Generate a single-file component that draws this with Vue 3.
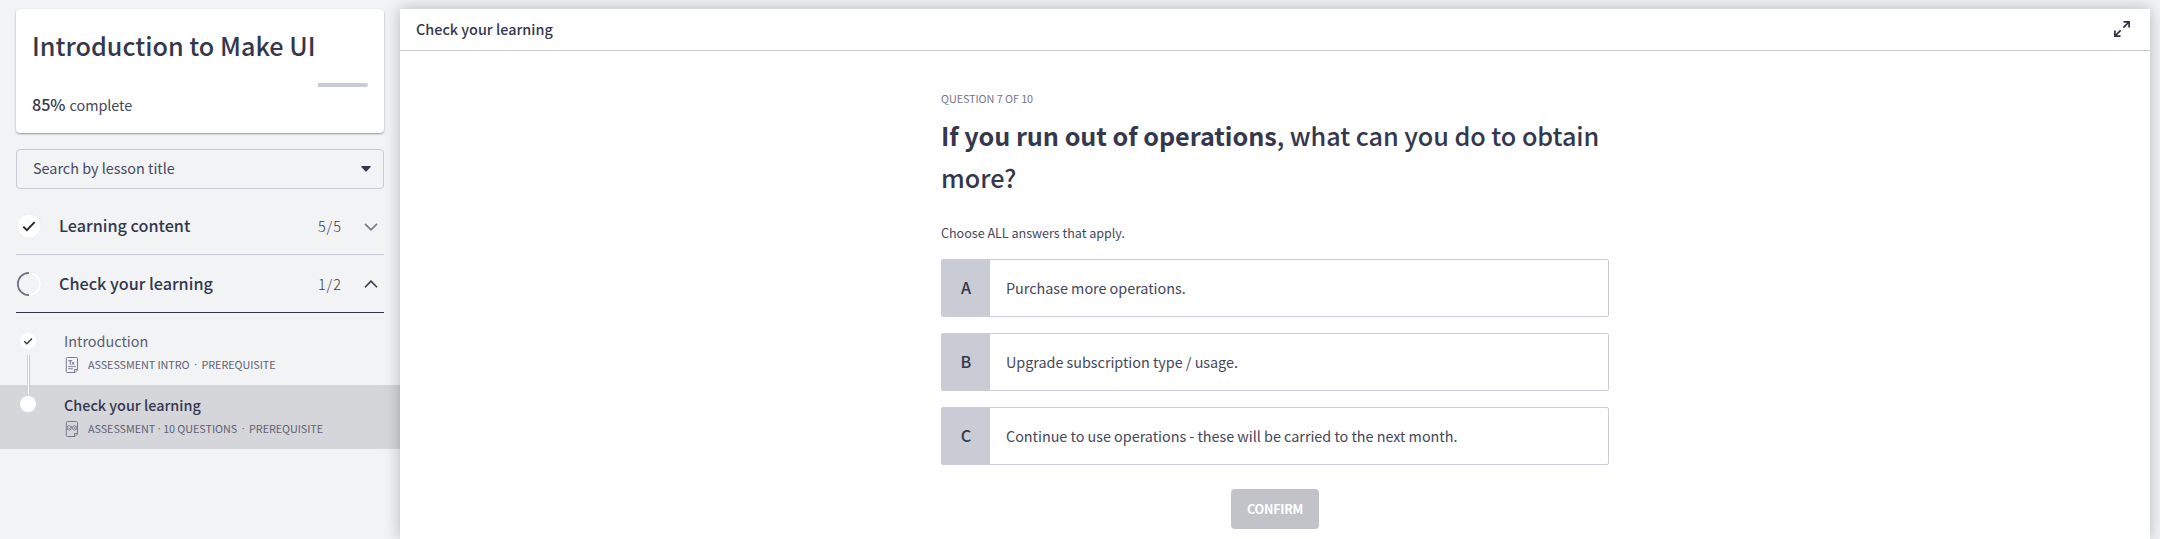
<script setup>
const answers = [
  { key: 'A', text: 'Purchase more operations.' },
  { key: 'B', text: 'Upgrade subscription type / usage.' },
  { key: 'C', text: 'Continue to use operations - these will be carried to the next month.' },
]
</script>

<template>
  <div class="app">
    <aside class="sidebar">
      <section class="course">
        <h1>Introduction to Make UI</h1>
        <div class="progress"><i></i></div>
        <p class="complete"><b>85%</b> <span>complete</span></p>
      </section>

      <div class="search">
        <span>Search by lesson title</span>
        <svg width="10" height="6" viewBox="0 0 10 6"><path d="M0.6 0H9.4Q10 .3 9.6 .9L5.7 5.3Q5 6 4.3 5.3L.4 .9Q0 .3 .6 0Z" fill="#34354e" /></svg>
      </div>

      <div class="group">
        <svg class="state" width="26" height="26" viewBox="0 0 26 26">
          <circle cx="13" cy="13" r="12" fill="#fff" stroke="#e4e6ea" stroke-width=".6" />
          <path d="M7.3 13.6L10.9 17.2L18.6 9.2" fill="none" stroke="#222" stroke-width="1.8" />
        </svg>
        <span class="name">Learning content</span>
        <span class="count">5/5</span>
        <svg class="chev" width="14" height="8" viewBox="0 0 14 8"><path d="M1 .8L7 6.8L13 .8" fill="none" stroke="#77798c" stroke-width="1.7" /></svg>
      </div>
      <div class="group open">
        <svg class="state" width="26" height="26" viewBox="0 0 26 26">
          <circle cx="13" cy="13" r="11.7" fill="none" stroke="#dfe1e5" stroke-width=".7" />
          <path d="M13 2A11 11 0 0 1 13 24" fill="none" stroke="#fff" stroke-width="1.7" />
          <path d="M13 1.8A11.2 11.2 0 0 0 13 24.2" fill="none" stroke="#6d6f82" stroke-width="1.7" />
        </svg>
        <span class="name">Check your learning</span>
        <span class="count">1/2</span>
        <svg class="chev" width="14" height="8" viewBox="0 0 14 8"><path d="M1 7.2L7 1.2L13 7.2" fill="none" stroke="#34354e" stroke-width="1.6" /></svg>
      </div>

      <ul class="lessons">
        <li class="lesson">
          <svg class="dot" width="16" height="16" viewBox="0 0 16 16">
            <circle cx="8" cy="8" r="8" fill="#fff" />
            <path d="M4.2 8.3L6.8 10.8L12 5.5" fill="none" stroke="#333" stroke-width="1.3" />
          </svg>
          <i class="link"></i>
          <div class="body">
            <div class="title">Introduction</div>
            <div class="meta">
              <svg width="14" height="16" viewBox="0 0 14 16" fill="none" stroke="#77798c" stroke-width="1">
                <path d="M2.5 .5H11.5Q12.5 .5 12.5 1.7V13L10 15.5H2.5Q1.3 15.5 1.3 14.3V1.7Q1.3 .5 2.5 .5ZM9.5 15.5V12.5H12.5" />
                <path d="M3.2 3.7H7.2M5.2 3.7V7.8M6.8 4.9L9.2 7.8M9.2 4.9L6.8 7.8" />
                <path d="M3.2 9.6H10.8M3.2 11.7H8" stroke-width=".9" />
              </svg>
              <span>ASSESSMENT INTRO</span><span class="sep">·</span><span>PREREQUISITE</span>
            </div>
          </div>
        </li>
        <li class="lesson active">
          <svg class="dot" width="16" height="16" viewBox="0 0 16 16"><circle cx="8" cy="8" r="8" fill="#fff" /></svg>
          <div class="body">
            <div class="title">Check your learning</div>
            <div class="meta">
              <svg width="14" height="16" viewBox="0 0 14 16" fill="none" stroke="#77798c" stroke-width="1">
                <path d="M2.5 .5H11.5Q12.5 .5 12.5 1.7V13L10 15.5H2.5Q1.3 15.5 1.3 14.3V1.7Q1.3 .5 2.5 .5ZM9.5 15.5V12.5H12.5" />
                <circle cx="4.2" cy="6.9" r="2.2" stroke-width=".9" /><circle cx="9.6" cy="6.9" r="2.2" stroke-width=".9" />
                <path d="M3.2 6.8L4.3 7.9L7 5M8.7 6L10.5 7.8M10.5 6L8.7 7.8" stroke-width=".8" />
              </svg>
              <span>ASSESSMENT</span><span class="sep tight">·</span><span>10 QUESTIONS</span><span class="sep">·</span><span>PREREQUISITE</span>
            </div>
          </div>
        </li>
      </ul>
    </aside>

    <main class="panel">
      <header class="bar">
        <span>Check your learning</span>
        <svg width="18" height="18" viewBox="0 0 18 18" fill="none" stroke="#2d3047" stroke-width="1.7">
          <path d="M10.5 1.9H16.1V7.5M16 2L10.4 7.6M1.9 10.5V16.1H7.5M2 16L7.6 10.4" />
        </svg>
      </header>
      <div class="quiz">
        <div class="step">QUESTION 7 OF 10</div>
        <h2><strong>If you run out of operations</strong>, what can you do to obtain<br />more?</h2>
        <p class="hint">Choose ALL answers that apply.</p>
        <div v-for="a in answers" :key="a.key" class="answer">
          <b>{{ a.key }}</b><span>{{ a.text }}</span>
        </div>
        <button class="confirm">CONFIRM</button>
      </div>
    </main>
  </div>
</template>

<style>
html, body { overflow: hidden; background: #f1f3f5; }
</style>

<style scoped>
* { box-sizing: border-box; }
h1, h2, p, ul { margin: 0; padding: 0; }
svg { display: block; flex: none; }
.app { display: flex; height: 539px; overflow: hidden; background: #f1f3f5; color: #34374d; white-space: nowrap; font-family: "Noto Sans CJK SC", "Noto Sans", sans-serif; }
.sidebar { width: 400px; flex: none; padding-top: 9px; }
.course { margin: 0 16px; height: 124px; padding: 20px 16px 0; background: #fff; border-radius: 4px; box-shadow: 0 1px 2px rgba(0, 0, 0, .4); }
h1 { font-size: 25.2px; line-height: 32px; font-weight: 500; }
.progress { height: 4px; margin-top: 22px; display: flex; justify-content: flex-end; }
.progress i { width: 50px; background: #c9cbd7; border-radius: 0 2px 2px 0; }
.complete { display: flex; align-items: baseline; margin-top: 7px; line-height: 20px; font-size: 14.4px; color: #45475b; gap: 4px; letter-spacing: -.05px; }
.complete b { font-size: 16.2px; font-weight: 500; color: #34374d; }
.search { margin: 16px 16px 0; height: 40px; border: 1px solid #c9cbd7; border-radius: 4px; display: flex; align-items: center; justify-content: space-between; padding: 0 12px 0 16px; font-size: 14.4px; line-height: 21px; color: #484a5c; }
.search span { padding-bottom: 3px; }
.group { margin: 0 16px; height: 58px; border-bottom: 1px solid #c9cbd7; display: flex; align-items: flex-start; padding-right: 6px; }
.search + .group { height: 66px; padding-top: 8px; }
.group.open { border-color: #34354e; }
.state { margin-top: 16px; }
.name { margin: 16px 0 0 17px; font-size: 16.2px; line-height: 24px; font-weight: 500; flex: 1; }
.count { font-size: 14.4px; line-height: 23px; letter-spacing: 1px; margin: 17px 22px 0 0; font-weight: 300; }
.chev { margin-top: 26px; }
.open .chev { margin-top: 25px; }
.lessons { list-style: none; padding-top: 8px; }
.lesson { display: flex; align-items: flex-start; height: 64px; padding: 9px 0 0 20px; position: relative; }
.lesson.active { background: #d5d6da; }
.dot { margin-top: 3px; }
.active .dot { margin-top: 2px; }
.link { position: absolute; left: 27px; top: 34px; width: 3px; height: 39px; background: #fff; border-left: 1px solid #d2d3d9; border-right: 1px solid #c8c9d0; z-index: 1; }
.body { margin-left: 28px; }
.title { font-size: 14.4px; line-height: 21px; color: #5b5d70; }
.active .title { font-weight: 500; color: #34354e; }
.meta { display: flex; align-items: flex-start; margin-top: 5px; font-size: 10.8px; line-height: 16px; letter-spacing: -.06px; color: #5f6175; padding-left: 1px; }
.meta svg { margin: 1px 9px 0 0; }
.sep { width: 12px; text-align: center; font-family: "Open Sans", sans-serif; }
.sep.tight { width: 8px; }
.panel { width: 1750px; flex: none; background: #fff; margin-top: 9px; box-shadow: 0 0 15px rgba(0, 0, 0, .25); position: relative; z-index: 2; }
.bar { height: 42px; border-bottom: 1px solid #c9cbd7; display: flex; align-items: center; justify-content: space-between; padding: 0 19px 2px 16px; font-size: 14.4px; font-weight: 500; line-height: 21px; }
.bar svg { margin-top: 1px; }
.quiz { width: 668px; margin: 37px auto 0; }
.step { font-size: 10.8px; line-height: 20px; letter-spacing: -.06px; color: #74768a; }
h2 { font-size: 25.2px; line-height: 42px; font-weight: 500; margin-top: 6px; letter-spacing: -.04px; }
.hint { font-size: 12.6px; line-height: 19px; margin-top: 25px; color: #45475b; margin-bottom: 17px; letter-spacing: -.03px; }
.answer { display: flex; height: 58px; border: 1px solid #c9cbd7; border-radius: 2px; margin-bottom: 16px; line-height: 55px; font-size: 14.4px; color: #45475b; letter-spacing: -.03px; }
.answer b { width: 48px; background: #c9cbd5; text-align: center; font-size: 16.2px; line-height: 54px; font-weight: 500; color: #34374d; }
.answer span { margin-left: 16px; }
.confirm { display: flex; align-items: flex-start; justify-content: center; width: 88px; height: 40px; margin: 24px auto 0; border: 0; padding: 0; border-radius: 4px; background: #c2c3c8; color: #fff; font: bold 12.6px/39px "Noto Sans CJK SC", sans-serif; letter-spacing: -.25px; }
</style>
